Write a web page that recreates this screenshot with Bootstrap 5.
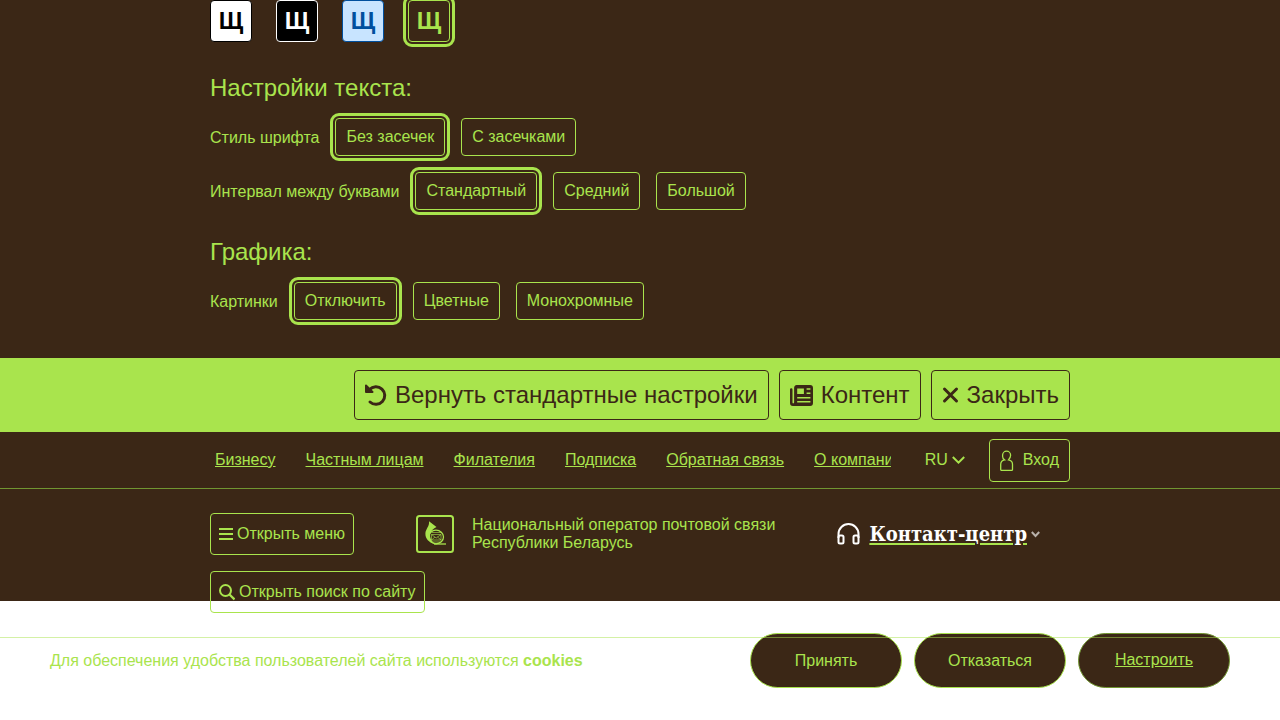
<!DOCTYPE html>
<html lang="ru">
<head>
<meta charset="utf-8">
<meta name="viewport" content="width=device-width, initial-scale=1">
<title>Белпочта</title>
<link href="https://cdn.jsdelivr.net/npm/bootstrap@5.3.0/dist/css/bootstrap.min.css" rel="stylesheet">
<style>
:root { --dark: #3b2716; --lime: #a9e44d; }
body { font-family: "Liberation Sans", Arial, sans-serif; font-size: 16px; line-height: 24px; color: var(--lime); background: #fff; overflow-x: hidden; }
a, a:hover { color: inherit; }
svg { flex: none; }
.bg-dark-brown { background: var(--dark); }
.wrap { width: 100%; max-width: 860px; margin-inline: auto; }
.settings { padding-bottom: 38px; }
.settings h2 { font-size: 24px; line-height: 28px; font-weight: 400; margin: 28px 0 16px; }
.settings .swatches + h2 { margin-top: 32px; }
.swatches { gap: 24px; }
.swatch { width: 42px; height: 42px; padding: 0; border: 1px solid; border-radius: 4px; font-size: 24px; font-weight: 700; line-height: 40px; }
.swatch-white { background: #fff; color: #000; }
.swatch-black { background: #000; color: #fff; }
.swatch-blue { background: #c8e4ff; color: #004f9e; }
.swatch-brown { background: var(--dark); color: var(--lime); }
.option-row { gap: 16px; }
.option-row > span { padding-top: 2px; }
.option-row + .option-row { margin-top: 16px; }
.line-btn { border: 1px solid var(--lime); border-radius: 4px; background: transparent; color: inherit; white-space: nowrap; }
.option { height: 38px; padding: 0 10px; }
.picked { outline: 3px solid var(--lime); outline-offset: 2px; }
.action-bar { background: var(--lime); color: var(--dark); padding: 12px 0; }
.action-bar .line-btn { border-color: var(--dark); height: 50px; padding: 0 10px; font-size: 24px; }
.action-row { gap: 10px; }
.top-line { border-bottom: 1px solid #719631; }
.top-row { height: 56px; }
.top-links { gap: 30px; padding-left: 5px; flex: 1 1 0; min-width: 0; overflow: hidden; white-space: nowrap; }
.lang { margin: 0 24px 0 34px; gap: 4px; background: none; border: 0; padding: 0; color: inherit; }
.login { height: 43px; padding: 0 10px; gap: 9px; }
.site-head { display: flow-root; padding-top: 24px; }
.head-btn { height: 42px; padding: 0 8px; gap: 4px; }
.brand-block { gap: 18px; line-height: 18px; margin-left: 62px; }
.contact { gap: 4px; margin-right: 30px; color: #fff; }
.contact a { font-family: "DejaVu Serif Condensed", "DejaVu Serif", serif; font-weight: 700; font-size: 20px; text-decoration-color: var(--lime); text-decoration-thickness: 2px; text-underline-offset: 2px; }
.contact-icon { margin-right: 5px; }
.search-btn { position: relative; margin: 16px 0 -12px; }
.cookie-bar { position: relative; margin-top: 32px; padding: 0 50px; }
.cookie-bar::after { content: ""; position: absolute; left: 0; right: 0; top: 4px; height: 1px; background: var(--lime); opacity: .5; }
.cookie-actions { gap: 12px; }
.pill { width: 152px; height: 55px; border: 1px solid var(--lime); border-radius: 28px; background: var(--dark); color: var(--lime); }
.pill-soft { border-color: #719631; text-decoration: underline; padding-bottom: 3px; }
</style>
</head>
<body>
<section class="bg-dark-brown settings">
  <div class="wrap">
    <div class="d-flex swatches">
      <button type="button" class="swatch swatch-white">Щ</button>
      <button type="button" class="swatch swatch-black">Щ</button>
      <button type="button" class="swatch swatch-blue">Щ</button>
      <button type="button" class="swatch swatch-brown picked" aria-pressed="true">Щ</button>
    </div>
    <h2>Настройки текста:</h2>
    <div class="d-flex flex-wrap align-items-center option-row">
      <span>Стиль шрифта</span>
      <button type="button" class="line-btn option picked" aria-pressed="true">Без засечек</button>
      <button type="button" class="line-btn option">С засечками</button>
    </div>
    <div class="d-flex flex-wrap align-items-center option-row">
      <span>Интервал между буквами</span>
      <button type="button" class="line-btn option picked" aria-pressed="true">Стандартный</button>
      <button type="button" class="line-btn option">Средний</button>
      <button type="button" class="line-btn option">Большой</button>
    </div>
    <h2>Графика:</h2>
    <div class="d-flex flex-wrap align-items-center option-row">
      <span>Картинки</span>
      <button type="button" class="line-btn option picked" aria-pressed="true">Отключить</button>
      <button type="button" class="line-btn option">Цветные</button>
      <button type="button" class="line-btn option">Монохромные</button>
    </div>
  </div>
</section>

<section class="action-bar">
  <div class="wrap d-flex flex-wrap justify-content-end action-row">
    <button type="button" class="line-btn d-flex align-items-center gap-2">
      <svg width="22" height="22" viewBox="0 0 22 22" fill="none" stroke="currentColor" stroke-width="3" stroke-linecap="round" aria-hidden="true"><path d="M4.500 5.500A8.800 8.800 0 1 1 5 18"/><path d="M1 1.500v6.500h6.500z" fill="currentColor" stroke-width="2" stroke-linejoin="round"/></svg>
      Вернуть стандартные настройки
    </button>
    <button type="button" class="line-btn d-flex align-items-center gap-2">
      <svg width="23" height="21" viewBox="0 0 24 21" preserveAspectRatio="none" fill="currentColor" aria-hidden="true"><path fill-rule="evenodd" d="M7 0h14a3 3 0 0 1 3 3v15a3 3 0 0 1-3 3H3a3 3 0 0 1-3-3V4.500a1.300 1.300 0 0 1 2.600 0V17.500a.8.8 0 0 0 1.700 0V3a3 3 0 0 1 2.700-3zM7.500 3.500v5.500h7V3.500zM17.300 3.300v1.500h4V3.300zM17.300 7.500V9h4V7.500zM7.500 12v1.500h13.800V12zM7.500 16v1.500h13.800V16z"/></svg>
      Контент
    </button>
    <button type="button" class="line-btn d-flex align-items-center gap-2">
      <svg width="17" height="18" viewBox="0 0 17 18" fill="none" stroke="currentColor" stroke-width="3" stroke-linecap="round" aria-hidden="true"><path d="M2.500 3l12 12M14.500 3l-12 12"/></svg>
      Закрыть
    </button>
  </div>
</section>

<header class="bg-dark-brown">
  <div class="top-line">
    <div class="wrap d-flex align-items-center top-row">
      <nav class="d-flex top-links">
        <a href="#">Бизнесу</a>
        <a href="#">Частным лицам</a>
        <a href="#">Филателия</a>
        <a href="#">Подписка</a>
        <a href="#">Обратная связь</a>
        <a href="#">О компании</a>
      </nav>
      <button type="button" class="d-flex align-items-center lang">RU
        <svg width="13" height="8" viewBox="0 0 13 8" fill="none" stroke="currentColor" stroke-width="2" aria-hidden="true"><path d="M.8 1l5.700 5.600L12.200 1"/></svg>
      </button>
      <button type="button" class="line-btn d-flex align-items-center login">
        <svg width="14" height="21" viewBox="0 0 14 21" fill="none" stroke="currentColor" stroke-width="1.300" aria-hidden="true"><path d="M2.600 6.500V5.200a4 4 0 0 1 8 0c0 2-1 3.500-2.100 4.700 2.600.6 4 2.300 4 4.300v5.200q0 1-1 1H1.700q-1 0-1-1v-5c0-2.500 1.500-4.100 4-4.500C3.500 9 2.600 8.500 2.600 6.500"/></svg>
        Вход
      </button>
    </div>
  </div>
  <div class="wrap site-head">
    <div class="d-flex align-items-center">
      <button type="button" class="line-btn d-flex align-items-center head-btn">
        <svg width="14" height="14" viewBox="0 0 14 14" stroke="currentColor" stroke-width="2" aria-hidden="true"><path d="M0 2h14M0 7h14M0 12h14"/></svg>
        Открыть меню
      </button>
      <div class="d-flex align-items-center brand-block">
        <svg width="38" height="38" viewBox="0 0 38 38" fill="none" stroke="currentColor" aria-hidden="true"><rect x="1" y="1" width="36" height="36" rx="2.500" stroke-width="2"/><path d="M13 6.300l7.500 5.700c-3 1.500-5.500 3.500-6.300 7-.7 3.500 1 6.800 4 9.300-5-.8-9-4.300-8.800-9.800.1-4.500 4.300-7 3.600-12.200z" fill="currentColor" stroke="none"/><ellipse cx="20" cy="22" rx="7.500" ry="6.800" stroke-width="1.300"/><path d="M18 29h12" stroke-width="1.300"/><path d="M15.500 19.500h9.500v5.500h-9.500zM15.500 19.500l4.700 3.500 4.800-3.500M15.500 25l3.500-3M25 25l-3.500-3M15.500 17.500h9.500M16 27h8.500" stroke-width=".6"/></svg>
        <span>Национальный оператор почтовой связи<br>Республики Беларусь</span>
      </div>
      <div class="d-flex align-items-center ms-auto contact">
        <svg class="contact-icon" width="23" height="22" viewBox="0 0 23 22" fill="none" stroke="currentColor" stroke-width="2" aria-hidden="true"><path d="M1.500 15v-4a10 10 0 0 1 20 0v4"/><rect x="1.500" y="12.500" width="5" height="8" rx="1.500"/><rect x="16.500" y="12.500" width="5" height="8" rx="1.500"/></svg>
        <a href="#">Контакт-центр</a>
        <svg width="9" height="7" viewBox="0 0 9 7" fill="none" stroke="#b9b1aa" stroke-width="2" aria-hidden="true"><path d="M.8 1l3.700 4L8.200 1"/></svg>
      </div>
    </div>
    <button type="button" class="line-btn d-flex align-items-center head-btn search-btn">
      <svg width="16" height="17" viewBox="0 0 16 17" fill="none" stroke="currentColor" stroke-width="2" aria-hidden="true"><circle cx="6.500" cy="6.500" r="5.500"/><path d="M10.500 10.500l5 5" stroke-width="2.300"/></svg>
      Открыть поиск по сайту
    </button>
  </div>
</header>

<section class="cookie-bar d-flex flex-wrap align-items-center justify-content-between">
  <div>Для обеспечения удобства пользователей сайта используются <b>cookies</b></div>
  <div class="d-flex cookie-actions">
    <button type="button" class="pill">Принять</button>
    <button type="button" class="pill">Отказаться</button>
    <button type="button" class="pill pill-soft">Настроить</button>
  </div>
</section>
<script src="https://cdn.jsdelivr.net/npm/bootstrap@5.3.0/dist/js/bootstrap.bundle.min.js"></script>
</body>
</html>
